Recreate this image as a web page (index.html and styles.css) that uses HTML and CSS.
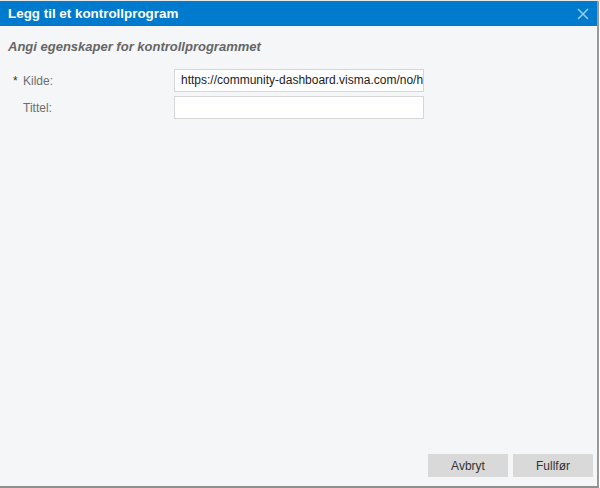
FILE: index.html
```html
<!DOCTYPE html>
<html>
<head>
<meta charset="utf-8">
<link rel="stylesheet" href="styles.css">
</head>
<body>
<div class="topstrip"></div>
<div class="dialog">
  <div class="header">
    <span class="title">Legg til et kontrollprogram</span>
    <svg class="close" width="12" height="12" viewBox="0 0 12 12"><path d="M1 1L11 11M11 1L1 11" stroke="#8fcaf2" stroke-width="1.6" fill="none"/></svg>
  </div>
  <div class="body">
    <div class="subtitle">Angi egenskaper for kontrollprogrammet</div>
    <div class="form">
      <div class="row">
        <label class="label"><span class="req">*</span>Kilde:</label>
        <div class="input">https://community-dashboard.visma.com/no/home</div>
      </div>
      <div class="row">
        <label class="label"><span class="req"></span>Tittel:</label>
        <div class="input"></div>
      </div>
    </div>
  </div>
  <div class="footer">
    <button class="btn">Avbryt</button>
    <button class="btn">Fullfør</button>
  </div>
</div>
</body>
</html>
```
FILE: styles.css
```css
html, body { margin: 0; padding: 0; }
body {
  width: 600px;
  height: 488px;
  background: #ffffff;
  font-family: "Liberation Sans", Arial, sans-serif;
  overflow: hidden;
}
.topstrip { height: 1px; background: #e8e8e8; }
.dialog {
  box-sizing: border-box;
  width: 599px;
  height: 487px;
  background: #f5f6f8;
  border-right: 2px solid #9a9a9a;
  border-bottom: 2px solid #8f8f8f;
  display: flex;
  flex-direction: column;
}
.header {
  height: 25px;
  background: #007acc;
  display: flex;
  align-items: center;
  justify-content: space-between;
  padding: 0 8px 0 8px;
  flex-shrink: 0;
}
.title {
  color: #fff;
  font-weight: bold;
  font-size: 13.4px;
}
.close { margin-top: 1px; }
.body { flex: 1; padding: 0 8px; }
.subtitle {
  margin-top: 13px;
  font-size: 13px;
  font-weight: bold;
  font-style: italic;
  color: #666;
}
.form { margin-top: 15px; display: flex; flex-direction: column; gap: 4px; }
.row { display: flex; align-items: center; height: 23px; }
.label {
  width: 161px;
  font-size: 12px;
  color: #6e6e6e;
  display: flex;
  align-items: center;
  padding-left: 5px;
}
.req { width: 10px; color: #333; font-size: 12px; }
.input {
  box-sizing: border-box;
  width: 250px;
  height: 23px;
  background: #fff;
  border: 1px solid #d4d6d9;
  font-size: 12px;
  color: #222;
  padding: 0 0 0 6px;
  line-height: 21px;
  white-space: nowrap;
  overflow: hidden;
}
.footer {
  display: flex;
  justify-content: flex-end;
  gap: 5px;
  padding: 0 4px 9px 0;
}
.btn {
  width: 80px;
  height: 23px;
  background: #d9d9d9;
  border: none;
  font-family: "Liberation Sans", Arial, sans-serif;
  font-size: 12px;
  color: #333;
  padding: 0;
}
```
